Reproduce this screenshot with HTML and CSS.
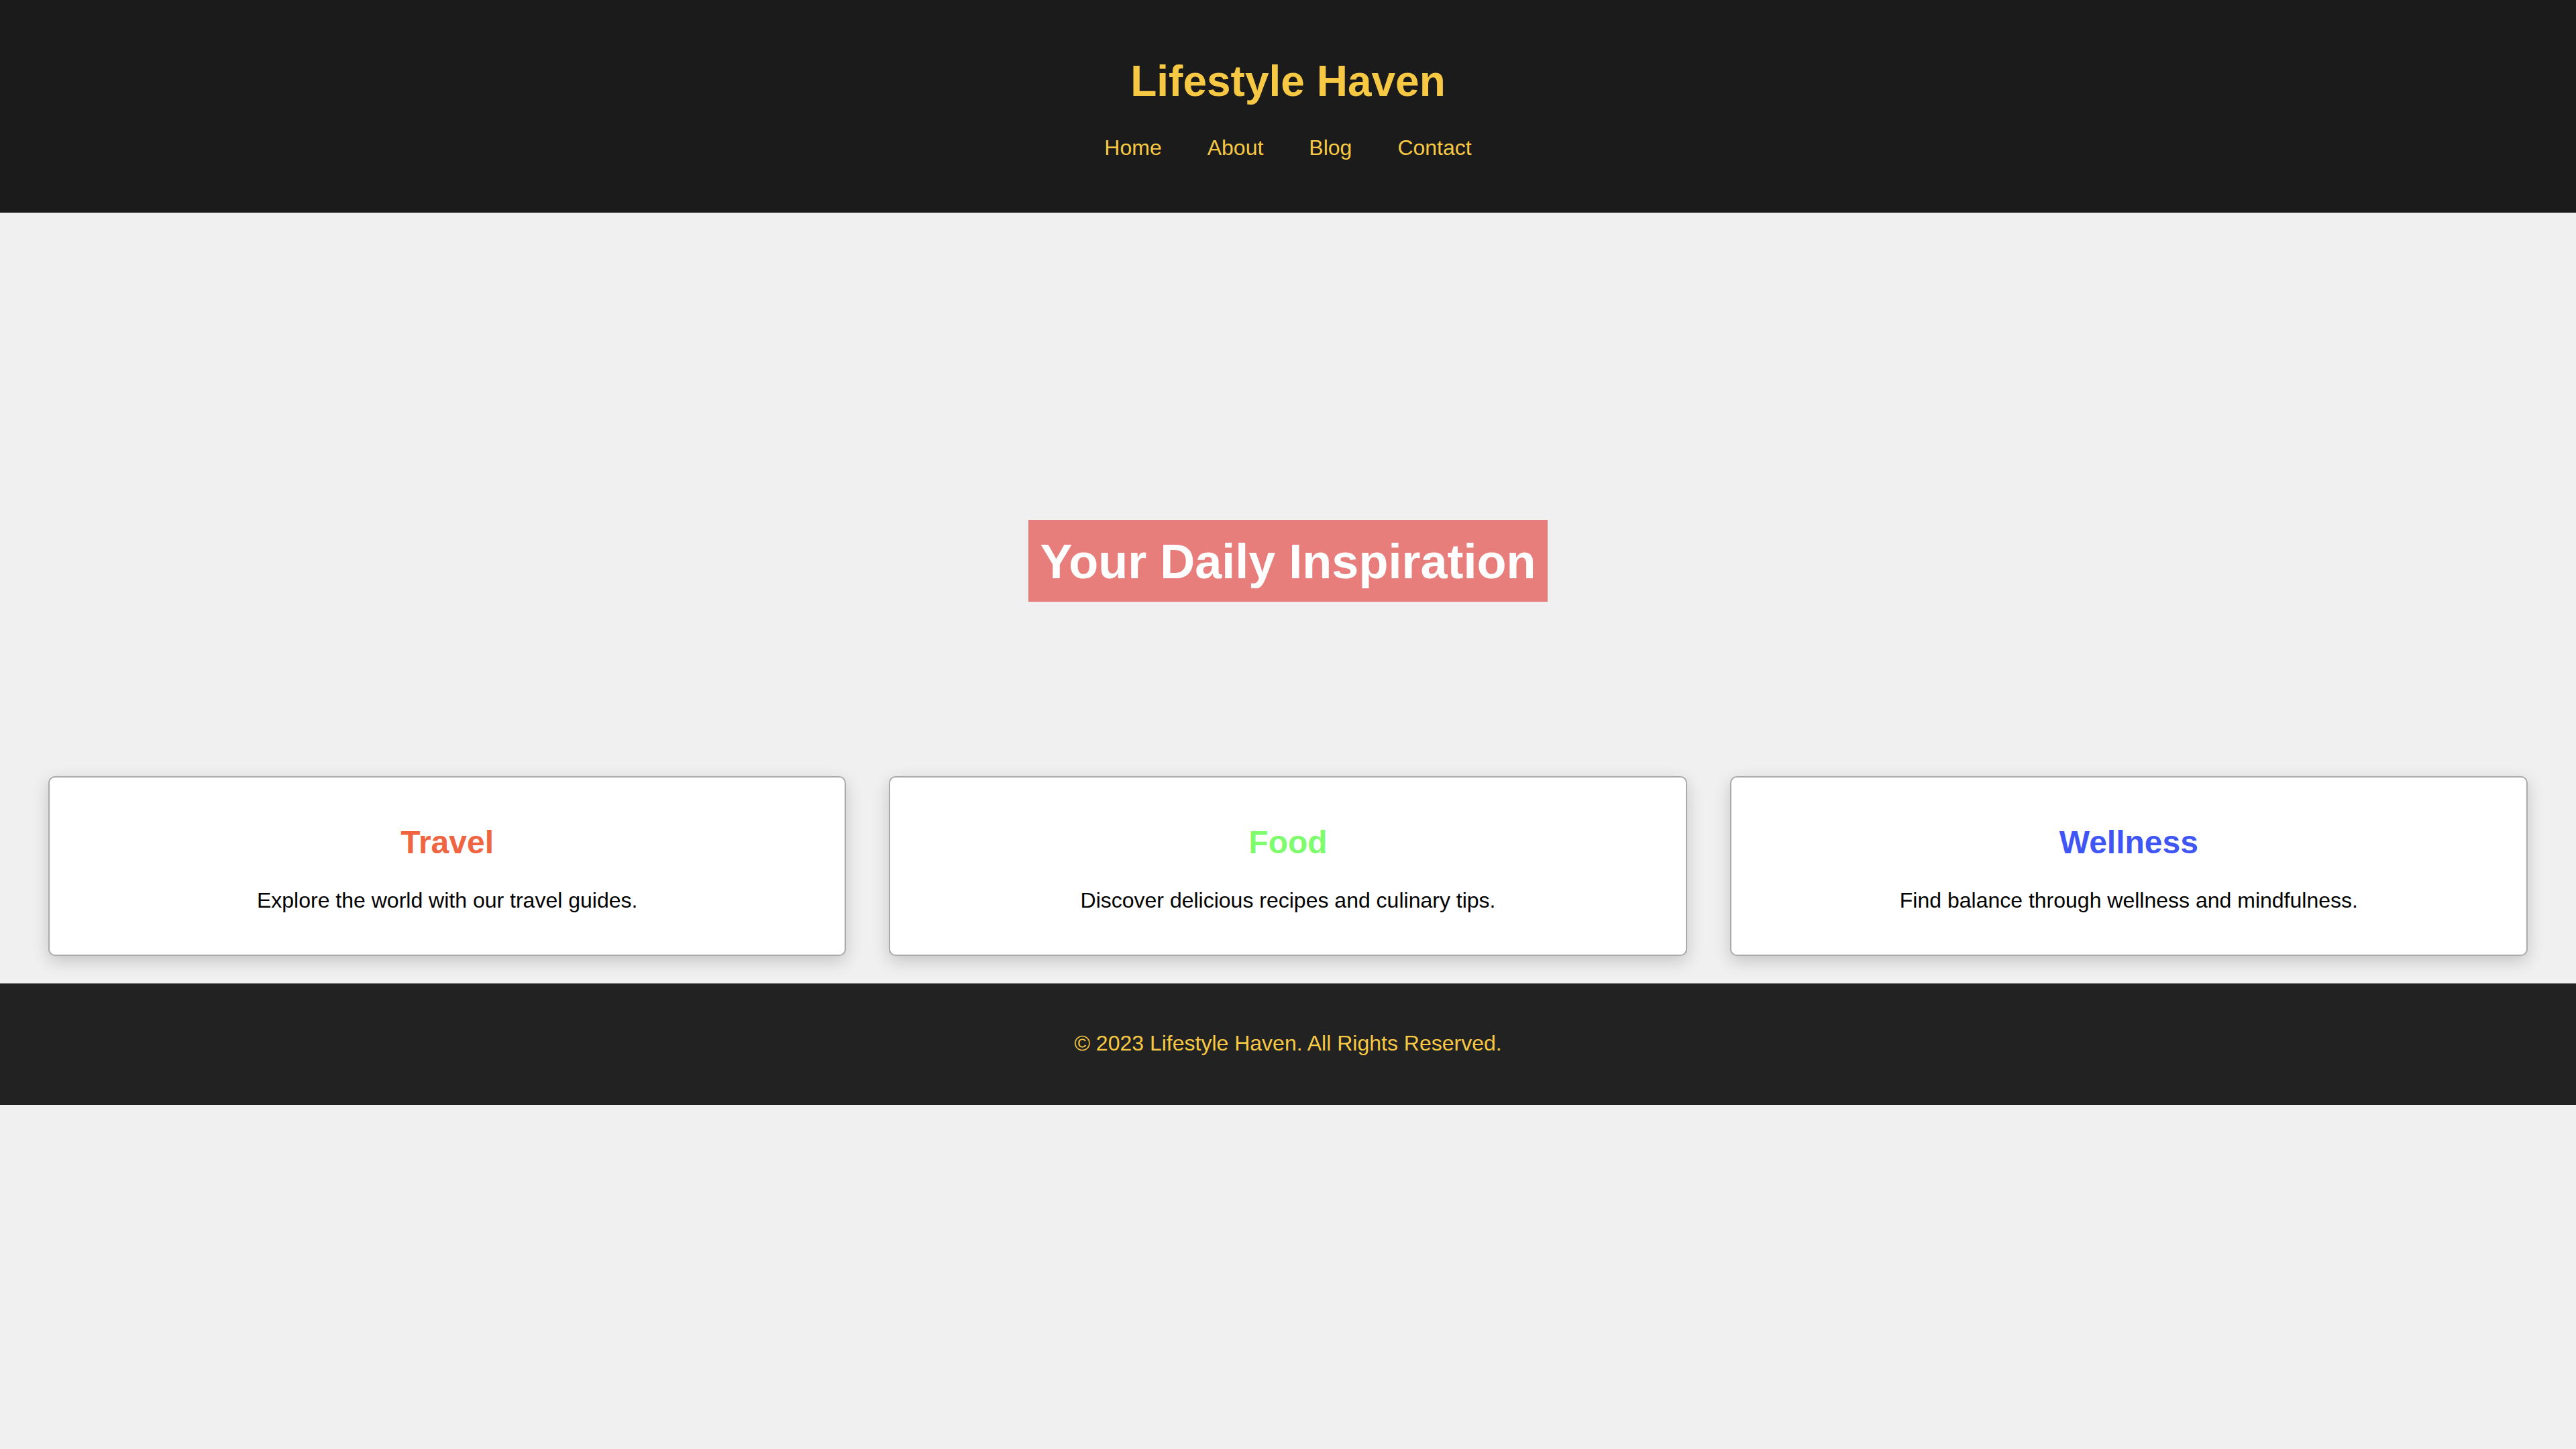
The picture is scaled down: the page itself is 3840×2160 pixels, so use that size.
FILE: index.html
```html
<!DOCTYPE html>
<html lang="en">
<head>
<meta charset="utf-8">
<title>Lifestyle Haven</title>
<link rel="stylesheet" href="styles.css">
</head>
<body>
<header class="site-header">
  <h1 class="site-title">Lifestyle Haven</h1>
  <nav class="site-nav">
    <a href="#" class="nav-link">Home</a>
    <a href="#" class="nav-link">About</a>
    <a href="#" class="nav-link">Blog</a>
    <a href="#" class="nav-link">Contact</a>
  </nav>
</header>
<main>
  <section class="hero">
    <h2 class="hero-title">Your Daily Inspiration</h2>
  </section>
  <section class="cards">
    <article class="card">
      <h3 class="card-title travel">Travel</h3>
      <p class="card-text">Explore the world with our travel guides.</p>
    </article>
    <article class="card">
      <h3 class="card-title food">Food</h3>
      <p class="card-text">Discover delicious recipes and culinary tips.</p>
    </article>
    <article class="card">
      <h3 class="card-title wellness">Wellness</h3>
      <p class="card-text">Find balance through wellness and mindfulness.</p>
    </article>
  </section>
</main>
<footer class="site-footer">
  <p class="footer-text">© 2023 Lifestyle Haven. All Rights Reserved.</p>
</footer>
</body>
</html>
```

FILE: styles.css
```css
* {
  box-sizing: border-box;
}

html, body {
  margin: 0;
  padding: 0;
}

body {
  background: #f0f0f0;
  font-family: "Liberation Sans", Arial, Helvetica, sans-serif;
  color: #000;
}

.site-header {
  background: #1b1b1b;
  padding: 84px 0 78px;
  text-align: center;
}

.site-title {
  margin: 0 0 44px;
  font-size: 64px;
  font-weight: bold;
  line-height: normal;
  color: #f7c843;
}

.site-nav {
  display: flex;
  justify-content: center;
  gap: 68px;
  font-size: 32px;
  line-height: normal;
}

.nav-link {
  color: #f7c843;
  text-decoration: none;
}

.hero {
  display: flex;
  justify-content: center;
  padding-top: 458px;
}

.hero-title {
  margin: 0;
  padding: 21px 18px 19px;
  background: #e77e7b;
  color: #ffffff;
  font-size: 72px;
  font-weight: bold;
  line-height: normal;
}

.cards {
  display: grid;
  grid-template-columns: repeat(3, 1fr);
  gap: 64px;
  padding: 260px 72px 41px;
}

.card {
  background: #ffffff;
  border: 2.5px solid #aaaaaa;
  border-radius: 10px;
  box-shadow: 0 8px 25px rgba(0, 0, 0, 0.18);
  padding: 69px 40px 62px;
  text-align: center;
}

.card-title {
  margin: 0 0 41px;
  font-size: 48px;
  font-weight: bold;
  line-height: normal;
}

.travel { color: #ef6542; }
.food { color: #7ffc6e; }
.wellness { color: #3f56f5; }

.card-text {
  margin: 0;
  font-size: 32px;
  line-height: normal;
}

.site-footer {
  background: #222222;
  padding: 40px 0;
  text-align: center;
}

.footer-text {
  margin: 31px 0 33px;
  font-size: 32px;
  line-height: normal;
  color: #f7c843;
}
```
